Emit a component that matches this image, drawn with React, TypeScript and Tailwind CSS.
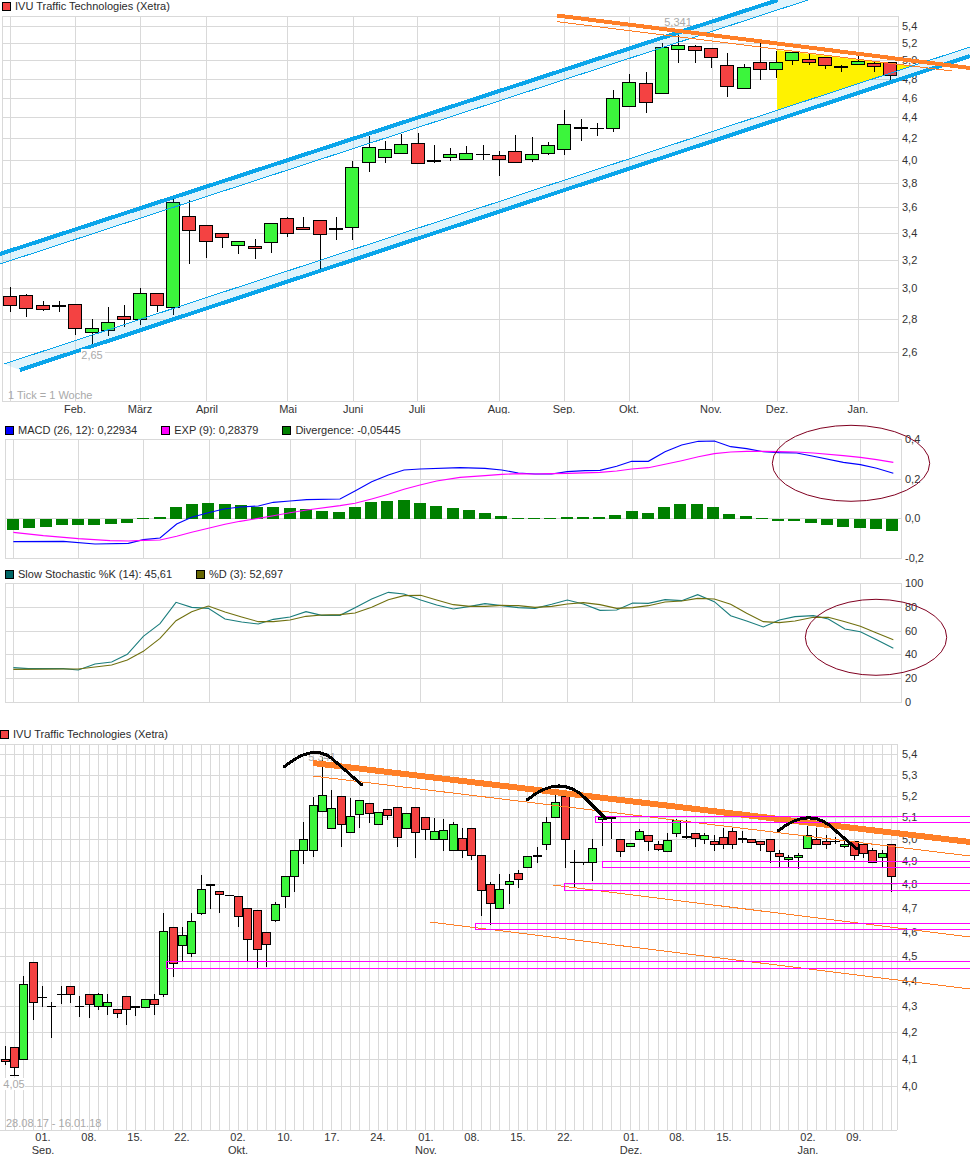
import React from "react";

type Candle = [number, number, number, number, string];

const GREEN = "#3cf53c";
const RED = "#f44242";
const GRID = "#d9d9d9";
const ORANGE = "#ff7f27";
const BLUE = "#0aa5ea";
const MAGENTA = "#ff00ff";

// wick top, wick bottom, body top, body bottom, r/g = body, k = thick doji, x = thin doji
const weekly: Candle[] = [
  [287, 312, 296, 305, "r"], [294, 317, 295, 308, "r"], [301, 311, 305, 309, "r"], [301, 312, 305, 305, "k"],
  [304, 335, 304, 328, "r"], [319, 344, 328, 332, "g"], [307, 336, 322, 330, "g"], [305, 327, 316, 319, "r"],
  [288, 325, 293, 319, "g"], [293, 312, 293, 305, "r"], [196, 315, 202, 307, "g"], [200, 264, 216, 230, "r"],
  [225, 258, 225, 241, "r"], [233, 248, 233, 237, "r"], [241, 254, 241, 245, "g"], [239, 259, 246, 248, "r"],
  [223, 253, 223, 242, "g"], [217, 237, 218, 233, "r"], [217, 230, 227, 229, "r"], [220, 269, 220, 234, "r"],
  [217, 240, 228, 228, "k"], [161, 240, 167, 227, "g"], [136, 172, 147, 162, "g"], [141, 163, 149, 157, "g"],
  [134, 153, 144, 153, "g"], [133, 163, 143, 163, "r"], [145, 163, 160, 160, "k"], [148, 161, 154, 157, "g"],
  [146, 159, 153, 159, "g"], [145, 160, 154, 154, "x"], [151, 176, 155, 159, "r"], [135, 162, 151, 162, "r"],
  [137, 162, 154, 159, "g"], [142, 155, 145, 153, "g"], [110, 155, 124, 149, "g"], [119, 141, 127, 127, "k"],
  [123, 136, 128, 128, "x"], [90, 132, 98, 128, "g"], [74, 107, 82, 106, "g"], [72, 113, 83, 102, "r"],
  [43, 93, 47, 93, "g"], [33, 63, 45, 49, "g"], [45, 63, 46, 50, "r"], [48, 68, 48, 57, "r"],
  [53, 97, 65, 86, "r"], [64, 88, 67, 88, "g"], [42, 80, 62, 69, "r"], [51, 78, 62, 69, "g"],
  [52, 65, 52, 60, "g"], [53, 65, 59, 62, "r"], [57, 69, 57, 65, "r"], [65, 72, 66, 66, "k"],
  [53, 64, 61, 64, "g"], [61, 72, 63, 66, "r"], [62, 81, 62, 75, "r"],
];

const daily: Candle[] = [
  [1046, 1065, 1059, 1061, "r"], [1047, 1075, 1047, 1067, "r"], [976, 1060, 984, 1059, "g"], [962, 1020, 962, 1002, "r"],
  [986, 1007, 997, 997, "x"], [1002, 1038, 1006, 1006, "x"], [986, 1004, 994, 994, "x"], [986, 1003, 986, 994, "r"],
  [996, 1017, 1006, 1006, "x"], [994, 1018, 994, 1004, "r"], [993, 1010, 994, 1006, "g"], [994, 1015, 1002, 1006, "g"],
  [1009, 1018, 1009, 1013, "r"], [996, 1025, 996, 1009, "r"], [1006, 1016, 1006, 1006, "k"], [999, 1008, 999, 1007, "g"],
  [994, 1015, 999, 1004, "r"], [913, 997, 931, 994, "g"], [927, 977, 927, 963, "r"], [927, 961, 935, 945, "g"],
  [913, 957, 921, 953, "g"], [875, 915, 889, 913, "g"], [884, 909, 884, 884, "k"], [891, 913, 891, 894, "r"],
  [895, 895, 895, 895, "x"], [896, 927, 896, 916, "r"], [908, 961, 908, 939, "r"], [910, 968, 910, 949, "r"],
  [932, 967, 932, 944, "r"], [902, 922, 904, 920, "g"], [876, 908, 876, 896, "g"], [850, 892, 850, 876, "g"],
  [822, 864, 839, 850, "g"], [797, 857, 805, 850, "g"], [757, 812, 795, 811, "g"], [790, 828, 808, 828, "g"],
  [796, 847, 796, 824, "r"], [798, 832, 816, 832, "g"], [800, 828, 800, 814, "g"], [803, 823, 803, 813, "r"],
  [812, 824, 812, 824, "g"], [809, 820, 809, 815, "r"], [807, 847, 807, 837, "r"], [813, 828, 813, 828, "g"],
  [807, 858, 807, 832, "r"], [817, 840, 817, 829, "r"], [818, 839, 831, 839, "g"], [819, 851, 830, 839, "g"],
  [822, 850, 824, 850, "g"], [828, 858, 838, 850, "r"], [828, 860, 828, 855, "r"], [855, 916, 855, 890, "r"],
  [882, 925, 884, 903, "r"], [874, 908, 889, 908, "g"], [874, 904, 881, 884, "g"], [870, 888, 873, 879, "r"],
  [856, 868, 856, 867, "g"], [847, 863, 855, 855, "k"], [817, 850, 822, 844, "g"], [792, 818, 802, 817, "g"],
  [792, 868, 796, 839, "r"], [850, 888, 862, 862, "x"], [862, 865, 862, 862, "x"], [839, 881, 848, 862, "g"],
  [818, 846, 817, 819, "g"], [817, 839, 817, 817, "k"], [839, 857, 839, 851, "r"], [843, 846, 843, 846, "g"],
  [829, 839, 831, 839, "g"], [835, 851, 835, 841, "r"], [841, 851, 844, 849, "r"], [833, 851, 840, 851, "g"],
  [819, 837, 820, 833, "g"], [820, 839, 836, 836, "k"], [833, 847, 833, 838, "r"], [833, 844, 835, 839, "g"],
  [835, 851, 841, 844, "r"], [828, 849, 837, 844, "r"], [827, 849, 831, 844, "r"], [831, 843, 838, 838, "k"],
  [839, 842, 839, 842, "r"], [841, 851, 841, 844, "r"], [839, 863, 839, 851, "r"], [850, 867, 853, 856, "r"],
  [855, 867, 857, 859, "g"], [853, 869, 855, 857, "g"], [826, 848, 835, 848, "g"], [828, 844, 839, 844, "r"],
  [835, 849, 841, 844, "r"], [837, 844, 841, 841, "x"], [838, 848, 844, 846, "g"], [841, 860, 841, 855, "r"],
  [844, 858, 844, 853, "r"], [848, 863, 850, 862, "r"], [850, 868, 853, 857, "g"], [844, 892, 844, 876, "r"],
];

const divergence = [
  10.7, 8.7, 7.7, 5.7, 5.7, 5.7, 4.7, 3.7, -1.3, -2.3, -12.3, -15.3, -16.3, -15.3, -14.3, -12.3, -12.3, -11.3, -10.3,
  -8.3, -7.3, -12.3, -17.3, -18.3, -19.3, -16.3, -13.3, -11.3, -9.3, -6.3, -3.3, -1.3, -1, -1, -2.3, -2.3, -2.3,
  -4.3, -8.3, -6.3, -12.3, -15.3, -15.3, -12.3, -5.3, -3.3, -1, 1.5, 1.5, 3.7, 5.7, 7.7, 8.7, 9.7, 11.7,
];

// line points were read off 3x crops, so convert them back to page pixels
const pts = (ox: number, oy: number, p: number[][]) => p.map(([x, y]) => `${ox + x / 3},${oy + y / 3}`).join(" ");

const macdLine =
  pts(0, 415, [[40, 380], [190, 379], [285, 387], [385, 385], [430, 374], [480, 369], [530, 327], [575, 307], [625, 293], [672, 282], [720, 276], [775, 273], [820, 262], [870, 258], [920, 254], [1020, 252], [1065, 228], [1115, 200], [1165, 180], [1212, 165], [1260, 162], [1380, 158]]) +
  " " +
  pts(485, 415, [[0, 160], [50, 165], [100, 174], [150, 177], [200, 177], [247, 170], [300, 167], [345, 166], [395, 154], [440, 139], [490, 139], [540, 110], [590, 90], [640, 79], [688, 78], [737, 95], [785, 101], [835, 110], [883, 113], [935, 114], [985, 124], [1075, 142], [1126, 149], [1175, 160], [1225, 175]]);

const expLine =
  pts(0, 415, [[40, 352], [130, 362], [235, 371], [330, 377], [385, 378], [430, 376], [480, 375], [530, 364], [575, 352], [625, 340], [675, 328], [720, 319], [775, 310], [820, 302], [870, 293], [920, 285], [1020, 272], [1065, 265], [1115, 252], [1165, 238], [1212, 223], [1260, 210], [1310, 198], [1380, 187]]) +
  " " +
  pts(485, 415, [[0, 182], [50, 178], [100, 176], [150, 177], [200, 176], [250, 175], [345, 172], [395, 168], [440, 162], [490, 158], [540, 148], [590, 137], [640, 125], [688, 116], [737, 111], [785, 109], [835, 109], [883, 110], [935, 111], [985, 114], [1075, 122], [1126, 127], [1175, 134], [1225, 142]]);

const kLine =
  pts(0, 565, [[40, 308], [85, 311], [190, 311], [235, 315], [285, 297], [335, 291], [382, 268], [430, 214], [480, 176], [528, 112], [575, 127], [625, 130], [675, 162], [725, 171], [775, 177], [820, 163], [870, 156], [918, 140], [965, 151], [1020, 151], [1065, 128], [1115, 102], [1165, 82], [1212, 87], [1262, 105], [1310, 120], [1360, 132], [1410, 124]]) +
  " " +
  pts(485, 565, [[0, 116], [50, 122], [100, 128], [150, 130], [200, 118], [247, 105], [295, 117], [345, 136], [395, 135], [443, 114], [490, 115], [540, 104], [590, 107], [638, 89], [688, 110], [737, 152], [785, 168], [835, 186], [883, 165], [930, 155], [985, 152], [1030, 162], [1080, 192], [1126, 200], [1175, 224], [1225, 250]]);

const dLine =
  pts(0, 565, [[40, 313], [190, 312], [235, 312], [285, 306], [335, 300], [382, 285], [430, 259], [480, 220], [528, 167], [575, 140], [625, 123], [675, 141], [725, 156], [775, 170], [820, 170], [870, 165], [918, 154], [965, 150], [1020, 149], [1065, 144], [1115, 127], [1165, 104], [1212, 92], [1262, 91], [1310, 105], [1360, 119], [1410, 124]]) +
  " " +
  pts(485, 565, [[0, 124], [50, 121], [100, 122], [150, 127], [200, 124], [247, 117], [295, 113], [345, 119], [395, 130], [443, 128], [490, 122], [540, 111], [590, 108], [638, 100], [688, 102], [737, 118], [785, 145], [835, 170], [883, 173], [930, 168], [985, 157], [1030, 157], [1080, 170], [1126, 184], [1175, 204], [1225, 224]]);

const CandleMark = ({ c, data, half, width }: { c: number; data: Candle; half: number; width: number }) => {
  const [wt, wb, bt, bb, kind] = data;
  return (
    <g shapeRendering="crispEdges">
      {wb > wt && <line x1={c + 0.5} x2={c + 0.5} y1={wt} y2={wb} stroke="#000" />}
      {kind === "x" && <line x1={c - half} x2={c - half + width + 1} y1={bt + 0.5} y2={bt + 0.5} stroke="#000" />}
      {kind === "k" && <rect x={c - half} y={bt} width={width + 1} height={2} fill="#000" />}
      {(kind === "r" || kind === "g") && (
        <rect x={c - half + 0.5} y={bt + 0.5} width={width} height={bb - bt} fill={kind === "r" ? RED : GREEN} stroke="#000" />
      )}
    </g>
  );
};

const Grid = ({ left, right, top, bottom, xs, ys }: { left: number; right: number; top: number; bottom: number; xs: number[]; ys: number[] }) => (
  <g stroke={GRID} shapeRendering="crispEdges">
    {ys.map((y) => (
      <line key={y} x1={left} x2={right} y1={y + 0.5} y2={y + 0.5} />
    ))}
    {xs.map((x) => (
      <line key={x} x1={x + 0.5} x2={x + 0.5} y1={top} y2={bottom} />
    ))}
  </g>
);

const Axis = ({ x, items }: { x: number; items: [string, number][] }) => (
  <g className="fill-[#333333] text-[11px]">
    {items.map(([t, y]) => (
      <text key={t} x={x} y={y + 4}>
        {t}
      </text>
    ))}
  </g>
);

const Hint = ({ x, y, children, anchor = "start" }: { x: number; y: number; children: string; anchor?: "start" | "middle" }) => (
  <text x={x} y={y} textAnchor={anchor} className="fill-[#a9a9a9] text-[11px]">
    {children}
  </text>
);

const Legend = ({ className, items }: { className: string; items: [string, string][] }) => (
  <div className={`flex h-3 items-center gap-6 text-[11px] leading-none text-[#2b2b2b] ${className}`}>
    {items.map(([color, label]) => (
      <div key={label} className="flex items-center gap-[4px]">
        <span className="h-[9px] w-[9px] border border-black" style={{ background: color }} />
        <span>{label}</span>
      </div>
    ))}
  </div>
);

const monthXs = [10, 75, 140, 206, 287, 353, 417, 499, 564, 629, 712, 777, 858];
const monthLabels: [string, number][] = [
  ["Feb.", 75], ["März", 140], ["April", 207], ["Mai", 288], ["Juni", 353], ["Juli", 417],
  ["Aug.", 499], ["Sep.", 564], ["Okt.", 629], ["Nov.", 711], ["Dez.", 777], ["Jan.", 858],
];

const WeeklyChart = () => (
  <svg width={970} height={412} viewBox="0 12 970 412" className="block overflow-visible">
    <Grid left={2} right={898} top={16} bottom={402} xs={[...monthXs, 2, 898]} ys={[16, 26, 43, 60, 79, 98, 117, 138, 160, 183, 207, 233, 260, 288, 319, 352, 401]} />
    <polygon points="777,50 912,66 777,110" fill="#fff200" />
    {weekly.map((d, i) => (
      <CandleMark key={i} c={Math.round(10 + 16.3 * i)} data={d} half={7} width={13} />
    ))}
    <Axis x={902} items={[["5,4", 26], ["5,2", 43], ["5,0", 60], ["4,8", 79], ["4,6", 98], ["4,4", 117], ["4,2", 138], ["4,0", 160], ["3,8", 183], ["3,6", 207], ["3,4", 233], ["3,2", 260], ["3,0", 288], ["2,8", 319], ["2,6", 352]]} />
    <g className="fill-[#333333] text-[11px]" textAnchor="middle">
      {monthLabels.map(([t, x]) => (
        <text key={t} x={x} y={413}>
          {t}
        </text>
      ))}
    </g>
    {/* the image ends here, descenders get cut */}
    <rect x={0} y={414} width={898} height={8} fill="#fff" />

    {/* channels */}
    <polygon points="0,254 778,0 808,0 0,264" fill={BLUE} fillOpacity={0.12} />
    <polygon points="4,364 970,47 970,56 20,370" fill={BLUE} fillOpacity={0.12} />
    <g shapeRendering="crispEdges">
      <line x1={0} y1={254} x2={778} y2={0} stroke={BLUE} strokeWidth={4} />
      <line x1={0} y1={264} x2={808} y2={0} stroke={BLUE} />
      <line x1={20} y1={370} x2={970} y2={56} stroke={BLUE} strokeWidth={4} />
      <line x1={4} y1={364} x2={970} y2={47} stroke={BLUE} />
      <line x1={557} y1={15.5} x2={970} y2={68} stroke={ORANGE} strokeWidth={4} />
      <line x1={557} y1={21.6} x2={952} y2={71} stroke={ORANGE} />
    </g>

    <rect x={81} y={349} width={24} height={12} fill="#fff" />
    <Hint x={92} y={359} anchor="middle">2,65</Hint>
    <Hint x={678} y={26} anchor="middle">5,341</Hint>
    <Hint x={8} y={399}>1 Tick = 1 Woche</Hint>
  </svg>
);

const macdXs = [13, 78, 143, 209, 290, 355, 420, 502, 567, 632, 714, 779, 860];

const MacdChart = () => (
  <svg width={970} height={132} viewBox="0 436 970 132" className="block overflow-visible">
    <Grid left={5} right={901} top={439} bottom={559} xs={[...macdXs, 5, 901]} ys={[439, 479, 518, 558]} />
    <g shapeRendering="crispEdges" fill="#008000">
      {divergence.map((d, i) => (
        <rect key={i} x={Math.round(13 + 16.28 * i) - 6} y={Math.min(519, 519 + d)} width={12} height={Math.abs(d)} />
      ))}
    </g>
    <polyline points={macdLine} fill="none" stroke="#0000ff" strokeWidth={1.1} />
    <polyline points={expLine} fill="none" stroke={MAGENTA} strokeWidth={1.1} />
    <Axis x={905} items={[["0,4", 439], ["0,2", 479], ["0,0", 518]]} />
    <Axis x={905} items={[["-0,2", 558]]} />
    <ellipse cx={851} cy={463.3} rx={78.7} ry={38} fill="none" stroke="#800020" />
  </svg>
);

const StochChart = () => (
  <svg width={970} height={148} viewBox="0 580 970 148" className="block overflow-visible">
    <Grid left={5} right={901} top={583} bottom={703} xs={[...macdXs, 5, 901]} ys={[583, 607, 631, 654, 678, 702]} />
    <polyline points={kLine} fill="none" stroke="#1a7d7d" strokeWidth={1.1} />
    <polyline points={dLine} fill="none" stroke="#70700f" strokeWidth={1.1} />
    <Axis x={905} items={[["100", 583], ["80", 607], ["60", 631], ["40", 654], ["20", 678], ["0", 702]]} />
    <ellipse cx={876} cy={637.3} rx={70.7} ry={38} fill="none" stroke="#800020" />
  </svg>
);

const dayXs = daily.map((_, i) => Math.round(4.7 + 9.33 * i));
const dayLabels: [string, number][] = [
  ["01.", 43], ["08.", 89], ["15.", 135], ["22.", 182], ["02.", 238], ["10.", 285], ["17.", 332], ["24.", 378],
  ["01.", 426], ["08.", 472], ["15.", 518], ["22.", 565], ["01.", 631], ["08.", 677], ["15.", 724], ["02.", 808], ["09.", 854],
];
const dayMonths: [string, number][] = [["Sep.", 43], ["Okt.", 238], ["Nov.", 426], ["Dez.", 631], ["Jan.", 808]];

const boxes = [
  [595, 816, 822],
  [602, 861, 867],
  [564, 883, 890],
  [475, 923, 929],
  [166, 961, 968],
];

const arcs = [
  "M284 767 Q316 740 337 763 L362 785",
  "M527 800 Q560 773 585 798 L605 818",
  "M778 831 Q811 804 837 832 L857 849",
];

const DailyChart = () => (
  <svg width={970} height={414} viewBox="0 740 970 414" className="block overflow-visible">
    <Grid left={0} right={897} top={744} bottom={1130} xs={[...dayXs, 897]} ys={[744, 754, 775, 796, 817, 839, 861, 884, 908, 932, 956, 981, 1006, 1032, 1059, 1086, 1130]} />
    {daily.map((d, i) => (
      <CandleMark key={i} c={dayXs[i]} data={d} half={4} width={8} />
    ))}
    <line x1={10} x2={19} y1={1075.5} y2={1075.5} stroke="#000" shapeRendering="crispEdges" />
    <Axis x={902} items={[["5,4", 754], ["5,3", 775], ["5,2", 796], ["5,1", 817], ["5,0", 839], ["4,9", 861], ["4,8", 884], ["4,7", 908], ["4,6", 932], ["4,5", 956], ["4,4", 981], ["4,3", 1006], ["4,2", 1032], ["4,1", 1059], ["4,0", 1086]]} />
    <g className="fill-[#333333] text-[11px]" textAnchor="middle">
      {dayLabels.map(([t, x]) => (
        <text key={x} x={x} y={1141}>
          {t}
        </text>
      ))}
      {dayMonths.map(([t, x]) => (
        <text key={t} x={x} y={1154}>
          {t}
        </text>
      ))}
    </g>

    <Hint x={322} y={761} anchor="middle">5,341</Hint>
    <rect x={0} y={1078} width={25} height={12} fill="#fff" />
    <Hint x={14} y={1088} anchor="middle">4,05</Hint>
    <Hint x={6} y={1127}>28.08.17 - 16.01.18</Hint>

    {/* drawn support / resistance */}
    <g shapeRendering="crispEdges">
      <line x1={313} y1={763} x2={970} y2={842} stroke={ORANGE} strokeWidth={6} />
      <line x1={313} y1={776} x2={970} y2={856} stroke={ORANGE} />
      <line x1={553} y1={885} x2={970} y2={937} stroke={ORANGE} />
      <line x1={430} y1={922} x2={970} y2={989} stroke={ORANGE} />
    </g>
    <g fill="none" stroke={MAGENTA} shapeRendering="crispEdges">
      {boxes.map(([x, t, b]) => (
        <path key={t} d={`M970 ${t + 0.5} H${x + 0.5} V${b + 0.5} H970`} />
      ))}
    </g>
    <g fill="none" stroke="#000" strokeWidth={3} strokeLinecap="round" shapeRendering="crispEdges">
      {arcs.map((d) => (
        <path key={d} d={d} />
      ))}
    </g>
  </svg>
);

export default function App() {
  return (
    <div className="flex h-[1154px] w-[970px] flex-col overflow-hidden bg-white font-['Liberation_Sans',Arial,sans-serif]">
      <Legend className="pl-[2px]" items={[[RED, "IVU Traffic Technologies (Xetra)"]]} />
      <WeeklyChart />
      <Legend
        className="pl-[5px]"
        items={[
          ["#0000ff", "MACD (26, 12): 0,22934"],
          [MAGENTA, "EXP (9): 0,28379"],
          ["#008000", "Divergence: -0,05445"],
        ]}
      />
      <MacdChart />
      <Legend
        className="pl-[5px]"
        items={[
          ["#006666", "Slow Stochastic %K (14): 45,61"],
          ["#666600", "%D (3): 52,697"],
        ]}
      />
      <StochChart />
      <Legend className="pl-0" items={[[RED, "IVU Traffic Technologies (Xetra)"]]} />
      <DailyChart />
    </div>
  );
}
